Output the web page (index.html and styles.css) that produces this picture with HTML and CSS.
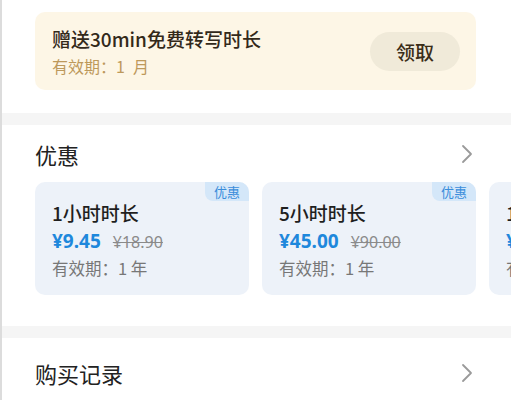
FILE: index.html
```html
<!DOCTYPE html>
<html lang="zh-CN">
<head>
<meta charset="utf-8">
<link rel="stylesheet" href="styles.css">
</head>
<body>
<div class="page">
  <section class="sec sec-gift">
    <div class="gift">
      <div class="gift-text">
        <div class="gift-title">赠送30min免费转写时长</div>
        <div class="gift-sub">有效期：1&ensp;月</div>
      </div>
      <button class="gift-btn">领取</button>
    </div>
  </section>
  <div class="band"></div>
  <section class="sec sec-offers">
    <div class="row-head">
      <span class="head-title">优惠</span>
      <svg class="chev" width="12" height="20" viewBox="0 0 12 20"><path d="M2 2 L10 10 L2 18" fill="none" stroke="#9a9a9a" stroke-width="1.8" stroke-linecap="round" stroke-linejoin="round"/></svg>
    </div>
    <div class="cards">
      <div class="card">
        <span class="badge">优惠</span>
        <div class="card-title">1小时时长</div>
        <div class="price"><span class="now">¥9.45</span><span class="old">¥18.90</span></div>
        <div class="valid">有效期：1 年</div>
      </div>
      <div class="card">
        <span class="badge">优惠</span>
        <div class="card-title">5小时时长</div>
        <div class="price"><span class="now">¥45.00</span><span class="old">¥90.00</span></div>
        <div class="valid">有效期：1 年</div>
      </div>
      <div class="card">
        <span class="badge">优惠</span>
        <div class="card-title">10小时时长</div>
        <div class="price"><span class="now">¥90.00</span><span class="old">¥180.00</span></div>
        <div class="valid">有效期：1 年</div>
      </div>
    </div>
  </section>
  <div class="band"></div>
  <section class="sec sec-record">
    <div class="row-head">
      <span class="head-title">购买记录</span>
      <svg class="chev" width="12" height="20" viewBox="0 0 12 20"><path d="M2 2 L10 10 L2 18" fill="none" stroke="#9a9a9a" stroke-width="1.8" stroke-linecap="round" stroke-linejoin="round"/></svg>
    </div>
  </section>
</div>
</body>
</html>
```

FILE: styles.css
```css
* { box-sizing: border-box; }
html, body { margin: 0; padding: 0; background: #fff; }
body {
  font-family: "Noto Sans CJK SC", "Noto Sans", sans-serif;
  color: #222;
  width: 511px;
  height: 400px;
  overflow: hidden;
}
.page {
  border-left: 2px solid #dcdcdc;
  height: 400px;
  overflow: hidden;
}
.sec { padding: 0 35px 0 33px; background: #fff; }
.band { height: 12px; background: #f5f5f5; }

.sec-gift { padding-top: 12px; padding-bottom: 23px; }
.gift {
  height: 78px;
  background: #fdf6e6;
  border-radius: 10px;
  display: flex;
  align-items: center;
  justify-content: space-between;
  padding: 0 16px 0 17px;
}
.gift-text { display: flex; flex-direction: column; gap: 6px; margin-top: 2px; }
.gift-title { font-size: 19px; font-weight: 500; color: #33291a; line-height: 22px; }
.gift-sub { font-size: 16px; color: #bd995b; line-height: 20px; }
.gift-btn {
  border: none;
  width: 90px;
  height: 39px;
  border-radius: 20px;
  background: #f0ead9;
  font-family: inherit;
  font-size: 19px;
  font-weight: 500;
  color: #3a2d18;
  padding: 0;
  margin-top: 1px;
}

.sec-offers { height: 201px; padding-top: 16px; padding-right: 0; }
.row-head {
  display: flex;
  align-items: center;
  justify-content: space-between;
  height: 26px;
}
.sec-offers .row-head { margin-right: 35px; }
.head-title { font-size: 22px; color: #222; line-height: 26px; }
.chev { margin-right: 3px; }

.cards {
  display: flex;
  gap: 13px;
  margin-top: 15px;
  overflow: hidden;
}
.card {
  flex: 0 0 214px;
  height: 113px;
  background: #edf2f9;
  border-radius: 10px;
  position: relative;
  padding: 20px 0 0 17px;
}
.badge {
  position: absolute;
  top: 0;
  right: 0;
  width: 44px;
  height: 19px;
  background: #d4e7f9;
  color: #3a8ddb;
  font-size: 13px;
  line-height: 19px;
  text-align: center;
  border-radius: 0 10px 0 8px;
}
.card-title { font-size: 19px; font-weight: 500; color: #1f1f1f; line-height: 22px; }
.price { display: flex; align-items: baseline; gap: 12px; margin-top: 5px; line-height: 24px; }
.now { font-family: "Noto Sans", sans-serif; font-size: 19px; font-weight: 700; color: #1e88dc; }
.old { font-family: "Noto Sans", sans-serif; font-size: 16px; color: #8a8a8a; text-decoration: line-through; }
.valid { font-size: 16.5px; color: #777; line-height: 22px; margin-top: 3px; }

.sec-record { padding-top: 22px; height: 62px; }
```
